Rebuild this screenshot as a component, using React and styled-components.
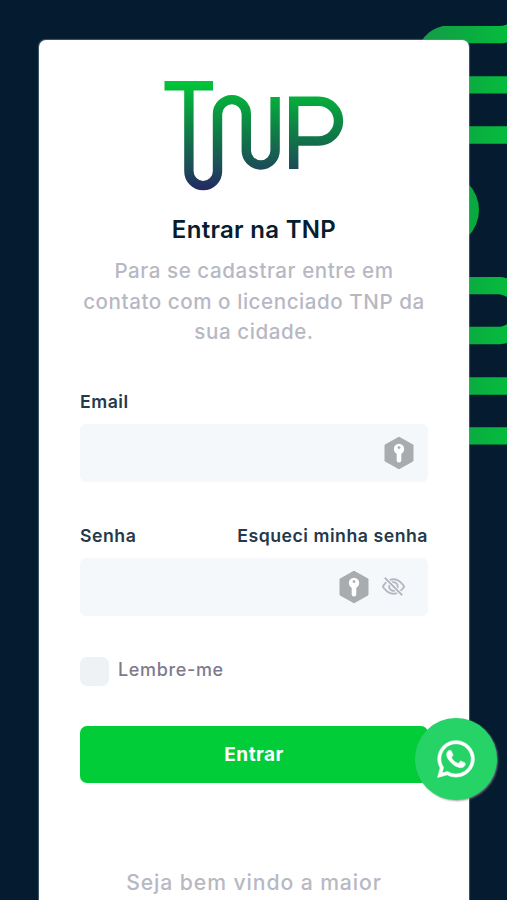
import React from 'react';
import styled, { createGlobalStyle } from 'styled-components';
import { FaWhatsapp } from 'react-icons/fa';
import { BsEyeSlash } from 'react-icons/bs';

const colors = {
  navy: '#051c30',
  title: '#071c2e',
  label: '#24394a',
  muted: '#b8b8c3',
  text: '#7e7a8c',
  field: '#f4f8fa',
  checkbox: '#eff2f5',
  green: '#00cd37',
  whatsapp: '#25d366',
};

// styles and wrappers
const GlobalStyle = createGlobalStyle`
  * {
    box-sizing: border-box;
  }
  body {
    margin: 0;
    background: ${colors.navy};
    font-family: Inter, 'Open Sans', sans-serif;
  }
`;
const Page = styled.div`
  position: relative;
  height: 900px;
  padding: 40px 38px 0 39px;
  background: ${colors.navy};
  overflow: hidden;
`;
const Backdrop = styled.svg`
  position: absolute;
  top: 0;
  right: 0;
`;
const Card = styled.form`
  position: relative;
  display: flex;
  flex-direction: column;
  height: 960px;
  padding: 41px 41px 40px;
  border-radius: 7px;
  background: #fff;
  box-shadow: 0 0 1px 1px rgba(120, 150, 165, 0.5);
`;
const LogoStyle = styled.svg`
  display: block;
  align-self: center;
  margin-bottom: 21px;
`;
const Title = styled.h1`
  margin: 0 0 8px;
  color: ${colors.title};
  font-size: 24px;
  font-weight: 600;
  line-height: 36px;
  letter-spacing: 0.3px;
  text-align: center;
  white-space: nowrap;
`;
const Lead = styled.p`
  margin: 0 -10px;
  color: ${colors.muted};
  font-size: ${(props) => props.$size || '20.6px'};
  font-weight: 500;
  line-height: 30.6px;
  letter-spacing: ${(props) => props.$spacing || '0.55px'};
  text-align: center;
  white-space: nowrap;
`;
const Field = styled.div`
  margin-top: ${(props) => props.$top};
`;
const LabelRow = styled.div`
  display: flex;
  justify-content: space-between;
  margin-bottom: 8px;
  line-height: 28px;
`;
const Label = styled.label`
  color: ${colors.label};
  font-size: 17.7px;
  font-weight: 600;
  letter-spacing: 0.52px;
  white-space: nowrap;
`;
const InputBox = styled.div`
  display: flex;
  align-items: center;
  height: 58px;
  padding-right: ${(props) => props.$right};
  border-radius: 6px;
  background: ${colors.field};
`;
const Input = styled.input`
  flex: 1;
  min-width: 0;
  height: 100%;
  padding: 0 16px;
  border: 0;
  outline: 0;
  background: transparent;
  font: inherit;
`;
const EyeIcon = styled(BsEyeSlash)`
  margin-left: 13px;
  color: #b3b5c0;
  font-size: 23px;
  stroke: #b3b5c0;
  stroke-width: 0.3px;
`;
const RememberRow = styled.label`
  display: flex;
  align-items: center;
  margin-top: 41px;
  color: ${colors.text};
  font-size: 18px;
  font-weight: 500;
  line-height: 29px;
`;
const Checkbox = styled.span`
  width: 29px;
  height: 29px;
  margin-right: 9px;
  border-radius: 7px;
  background: ${colors.checkbox};
`;
const RememberText = styled.span`
  margin-top: -3px;
  letter-spacing: 0.65px;
`;
const SubmitButton = styled.button`
  height: 57px;
  margin: 40px 0 84px;
  padding: 0;
  border: 0;
  border-radius: 7px;
  background: ${colors.green};
  color: #fff;
  font-family: inherit;
  font-size: 19px;
  font-weight: 700;
  letter-spacing: 0.45px;
`;
const WhatsappButton = styled.a`
  position: absolute;
  left: 414.5px;
  top: 718px;
  display: flex;
  align-items: center;
  justify-content: center;
  width: 82px;
  height: 82px;
  border-radius: 50%;
  background: ${colors.whatsapp};
  box-shadow: 1px 1px 2px rgba(130, 140, 140, 0.8);
  color: #fff;
  font-size: 42px;

  svg {
    stroke: #fff;
    stroke-width: 8px;
  }
`;

function Logo() {
  return (
    <LogoStyle width="180" height="110" viewBox="164 81 180 110" fill="none">
      <defs>
        <linearGradient id="logo" gradientUnits="userSpaceOnUse" x1="0" y1="81" x2="0" y2="190">
          <stop offset="0" stopColor="#00c838" />
          <stop offset="0.15" stopColor="#05ae3c" />
          <stop offset="0.5" stopColor="#107848" />
          <stop offset="0.8" stopColor="#1c4c58" />
          <stop offset="1" stopColor="#252865" />
        </linearGradient>
      </defs>
      <g stroke="url(#logo)" strokeWidth="9.4">
        <path d="M164.5 85.7H213M188.9 85V171.3a14.3 14.3 0 0 0 28.6 0V114a14.4 14.4 0 0 1 28.8 0V150.6a14.4 14.4 0 0 0 28.8 0V97" />
        <path d="M293.7 169V101.2H318.6a19.9 19.9 0 0 1 0 39.8H294" />
      </g>
    </LogoStyle>
  );
}

function KeyIcon() {
  return (
    <svg width="30" height="34" viewBox="0 0 30 34">
      <path d="M15 1.2 29 9v16L15 32.8 1 25V9Z" fill="#a8acaf" stroke="#a8acaf" strokeLinejoin="round" />
      <circle cx="15" cy="13" r="5.2" fill="#fff" />
      <path d="M15 15v9.2" stroke="#fff" strokeWidth="4.6" strokeLinecap="round" />
      <circle cx="15" cy="11.6" r="1.4" fill="#a8acaf" />
    </svg>
  );
}

function Lines() {
  return (
    <Backdrop width="107" height="460" viewBox="400 0 107 460" fill="none">
      <defs>
        <linearGradient id="lines" gradientUnits="userSpaceOnUse" x1="420" y1="0" x2="507" y2="0">
          <stop offset="0" stopColor="#159b48" />
          <stop offset="0.6" stopColor="#0aad40" />
          <stop offset="1" stopColor="#05bc3c" />
        </linearGradient>
      </defs>
      <g stroke="url(#lines)" strokeWidth="17.3">
        <path d="M426 56a24 22 0 0 1 18-21.4H498q8 0 14-3" />
        <path d="M460 84.8h47.1v.01M460 135h47.1v.01" />
        <path d="M460 285.7H500a25 25 0 0 1 0 49.8H460" />
        <path d="M460 386h47.1v.01M460 435.9h47.1v.01" />
      </g>
      <circle cx="441.5" cy="210" r="37.5" fill="#08aa40" />
    </Backdrop>
  );
}

// export main component
export default function App() {
  return (
    <>
      <GlobalStyle />
      <Page>
        <Lines />
        <Card>
          <Logo />
          <Title>Entrar na TNP</Title>
          <Lead>
            Para se cadastrar entre em
            <br />
            contato com o licenciado TNP da
            <br />
            sua cidade.
          </Lead>

          <Field $top="40px">
            <LabelRow>
              <Label htmlFor="email">Email</Label>
            </LabelRow>
            <InputBox $right="14.5px">
              <Input id="email" type="email" />
              <KeyIcon />
            </InputBox>
          </Field>

          <Field $top="40px">
            <LabelRow>
              <Label htmlFor="password">Senha</Label>
              <Label as="a">Esqueci minha senha</Label>
            </LabelRow>
            <InputBox $right="23px">
              <Input id="password" type="password" />
              <KeyIcon />
              <EyeIcon />
            </InputBox>
          </Field>

          <RememberRow>
            <Checkbox />
            <RememberText>Lembre-me</RememberText>
          </RememberRow>

          <SubmitButton type="button">Entrar</SubmitButton>
          <Lead $size="21.2px" $spacing="0.9px">Seja bem vindo a maior</Lead>
        </Card>
        <WhatsappButton aria-label="WhatsApp">
          <FaWhatsapp />
        </WhatsappButton>
      </Page>
    </>
  );
}
